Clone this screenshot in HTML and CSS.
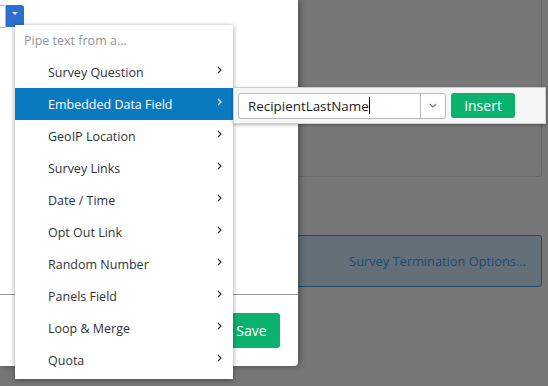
FILE: index.html
```html
<!DOCTYPE html>
<html lang="en">
<head>
  <meta charset="UTF-8" />
  <title>Piped Text</title>
  <link rel="stylesheet" href="styles.css">
</head>
<body>
  <div class="page">
    <div class="modal">
      <div class="modal-top">
        <span class="field-edge"></span>
        <button class="pipe-toggle"><span class="caret"></span></button>
      </div>
      <div class="modal-body"></div>
      <div class="modal-footer">
        <button class="save">Save</button>
      </div>
    </div>
    <div class="behind">
      <div class="panel"></div>
      <div class="termination">Survey Termination Options...</div>
    </div>
  </div>

  <div class="pipe-menu">
    <div class="menu-head">Pipe text from a...</div>
    <ul>
      <li>Survey Question<svg viewBox="0 0 5 8"><polyline points="1,1 4,4 1,7"/></svg></li>
      <li class="active">Embedded Data Field<svg viewBox="0 0 5 8"><polyline points="1,1 4,4 1,7"/></svg></li>
      <li>GeoIP Location<svg viewBox="0 0 5 8"><polyline points="1,1 4,4 1,7"/></svg></li>
      <li>Survey Links<svg viewBox="0 0 5 8"><polyline points="1,1 4,4 1,7"/></svg></li>
      <li>Date / Time<svg viewBox="0 0 5 8"><polyline points="1,1 4,4 1,7"/></svg></li>
      <li>Opt Out Link<svg viewBox="0 0 5 8"><polyline points="1,1 4,4 1,7"/></svg></li>
      <li>Random Number<svg viewBox="0 0 5 8"><polyline points="1,1 4,4 1,7"/></svg></li>
      <li>Panels Field<svg viewBox="0 0 5 8"><polyline points="1,1 4,4 1,7"/></svg></li>
      <li>Loop &amp; Merge<svg viewBox="0 0 5 8"><polyline points="1,1 4,4 1,7"/></svg></li>
      <li>Quota<svg viewBox="0 0 5 8"><polyline points="1,1 4,4 1,7"/></svg></li>
    </ul>
  </div>

  <div class="submenu">
    <div class="combo">
      <span class="combo-text">RecipientLastName<span class="cursor"></span></span>
      <span class="combo-arrow"><svg viewBox="0 0 8 5"><polyline points="1,1 4,4 7,1"/></svg></span>
    </div>
    <button class="insert">Insert</button>
  </div>
</body>
</html>
```

FILE: styles.css
```css
body {
  margin: 0;
  width: 548px;
  height: 386px;
  overflow: hidden;
  position: relative;
  background-color: #777777;
  font-family: 'Open Sans', sans-serif;
  font-size: 12.5px;
  color: #2f3337;
}
button {
  font-family: inherit;
  border: none;
  cursor: pointer;
}
.page {
  display: flex;
  height: 386px;
}

/* modal (under the menus) */
.modal {
  width: 298px;
  height: 366px;
  flex-shrink: 0;
  background-color: #ffffff;
  border-bottom-right-radius: 4px;
  box-shadow: 2px 0 6px rgba(0, 0, 0, 0.35);
  display: flex;
  flex-direction: column;
  position: relative;
  z-index: 1;
}
.modal-top {
  display: flex;
  padding-top: 5px;
  height: 22px;
}
.field-edge {
  width: 5px;
  height: 21px;
  border: 1px solid #b5b5b5;
  border-left: none;
  border-radius: 0 2px 2px 0;
}
.pipe-toggle {
  width: 18px;
  height: 22px;
  padding: 0;
  background-color: #2c6fce;
  border-radius: 0 3px 3px 0;
  display: flex;
  justify-content: center;
  padding-top: 7px;
}
.caret {
  width: 0;
  height: 0;
  border-left: 3px solid transparent;
  border-right: 3px solid transparent;
  border-top: 3px solid #dfe8f6;
}
.modal-body {
  flex: 1;
  border-bottom: 1px solid #9a9a9a;
}
.modal-footer {
  display: flex;
  justify-content: flex-end;
  padding: 18px 18px 18px 0;
}
.save {
  width: 57px;
  height: 35px;
  background-color: #0bb26e;
  color: #ffffff;
  font-size: 14px;
  border-radius: 3px;
}

/* greyed page behind the overlay */
.behind {
  flex: 1;
  padding: 0 6px 0 0;
  display: flex;
  flex-direction: column;
}
.panel {
  height: 177px;
  border: 1px solid #686868;
  border-top: none;
  border-left: none;
  border-radius: 0 0 3px 0;
  box-sizing: border-box;
}
.termination {
  margin: 58px 0 0 -10px;
  height: 52px;
  box-sizing: border-box;
  border: 1px solid #1d4a6e;
  border-radius: 3px;
  background-color: #637079;
  color: #1d4a70;
  font-size: 12.8px;
  display: flex;
  align-items: center;
  justify-content: flex-end;
  padding-right: 15px;
}

/* pipe text menu */
.pipe-menu {
  position: absolute;
  left: 15px;
  top: 25px;
  width: 218px;
  height: 354px;
  background-color: #ffffff;
  box-shadow: 0 1px 5px rgba(0, 0, 0, 0.4);
  z-index: 2;
}
.menu-head {
  height: 31px;
  line-height: 31px;
  padding-left: 9px;
  color: #939393;
}
.pipe-menu ul {
  list-style: none;
  margin: 0;
  padding: 0;
}
.pipe-menu li {
  height: 32px;
  box-sizing: border-box;
  padding-top: 2px;
  line-height: 30px;
  padding-left: 33px;
  position: relative;
}
.pipe-menu li.active {
  background-color: #0a7ac0;
  color: #ffffff;
}
.pipe-menu li svg {
  position: absolute;
  right: 11px;
  top: 10px;
  width: 5px;
  height: 8px;
  fill: none;
  stroke: #2f3337;
  stroke-width: 1.2;
}
.pipe-menu li.active svg {
  stroke: #ffffff;
}

/* embedded data field popup */
.submenu {
  position: absolute;
  left: 233px;
  top: 87px;
  width: 313px;
  height: 37px;
  box-sizing: border-box;
  background-color: #f6f6f6;
  border: 1px solid #d0d0d0;
  box-shadow: 0 1px 3px rgba(0, 0, 0, 0.3);
  display: flex;
  align-items: center;
  padding-left: 4px;
  gap: 5px;
  z-index: 3;
}
.combo {
  width: 208px;
  height: 26px;
  box-sizing: border-box;
  border: 1px solid #b9b9b9;
  border-radius: 3px;
  background-color: #ffffff;
  display: flex;
}
.combo-text {
  flex: 1;
  padding-left: 9px;
  line-height: 24px;
  font-size: 13.4px;
  color: #1b1b1b;
}
.cursor {
  display: inline-block;
  width: 1px;
  height: 17px;
  background-color: #000;
  vertical-align: -3px;
}
.combo-arrow {
  width: 24px;
  border-left: 1px solid #b9b9b9;
  display: flex;
  align-items: center;
  justify-content: center;
}
.combo-arrow svg {
  width: 8px;
  height: 5px;
  fill: none;
  stroke: #6c7a8a;
  stroke-width: 1.2;
}
.insert {
  width: 64px;
  height: 25px;
  background-color: #0bb26e;
  color: #ffffff;
  font-size: 14px;
  border-radius: 3px;
  padding: 0;
}
```
